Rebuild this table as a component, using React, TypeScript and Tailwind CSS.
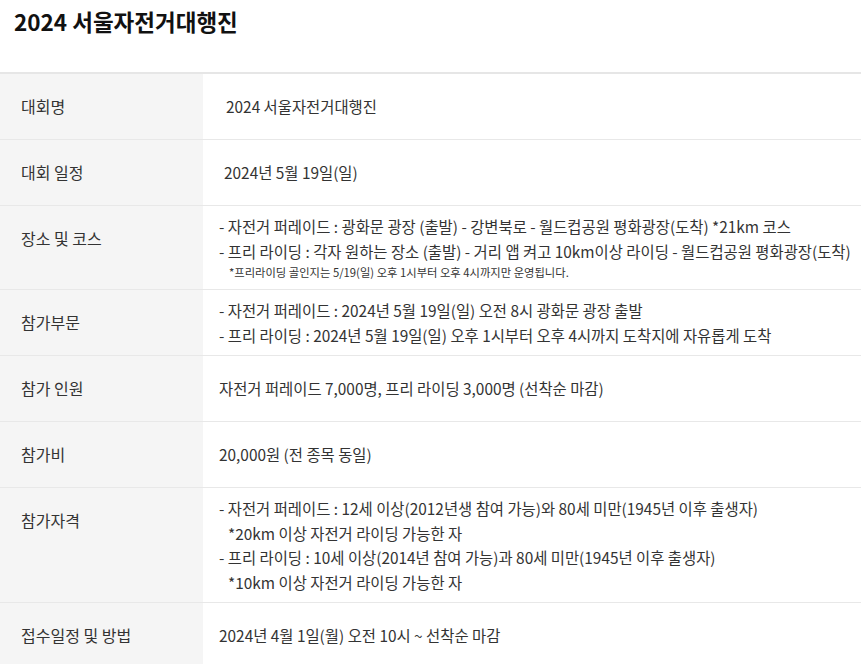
import React from "react";

const font = { fontFamily: '"Noto Sans CJK KR", "Noto Sans", sans-serif' };

type Row = { label: string; content: React.ReactNode };

const rows: Row[] = [
  { label: "대회명", content: <div className="ml-[7px]">2024 서울자전거대행진</div> },
  { label: "대회 일정", content: <div className="ml-[5px]">2024년 5월 19일(일)</div> },
  {
    label: "장소 및 코스",
    content: (
      <div>
        <div>- 자전거 퍼레이드 : 광화문 광장 (출발) - 강변북로 - 월드컵공원 평화광장(도착) *21km 코스</div>
        <div>- 프리 라이딩 : 각자 원하는 장소 (출발) - 거리 앱 켜고 10km이상 라이딩 - 월드컵공원 평화광장(도착)</div>
        <div className="pl-[10px] text-[11.3px] leading-[18px]">*프리라이딩 골인지는 5/19(일) 오후 1시부터 오후 4시까지만 운영됩니다.</div>
      </div>
    ),
  },
  {
    label: "참가부문",
    content: (
      <div>
        <div>- 자전거 퍼레이드 : 2024년 5월 19일(일) 오전 8시 광화문 광장 출발</div>
        <div>- 프리 라이딩 : 2024년 5월 19일(일) 오후 1시부터 오후 4시까지 도착지에 자유롭게 도착</div>
      </div>
    ),
  },
  { label: "참가 인원", content: <div>자전거 퍼레이드 7,000명, 프리 라이딩 3,000명 (선착순 마감)</div> },
  { label: "참가비", content: <div>20,000원 (전 종목 동일)</div> },
  {
    label: "참가자격",
    content: (
      <div>
        <div>- 자전거 퍼레이드 : 12세 이상(2012년생 참여 가능)와 80세 미만(1945년 이후 출생자)</div>
        <div className="pl-[9px]">*20km 이상 자전거 라이딩 가능한 자</div>
        <div>- 프리 라이딩 : 10세 이상(2014년 참여 가능)과 80세 미만(1945년 이후 출생자)</div>
        <div className="pl-[9px]">*10km 이상 자전거 라이딩 가능한 자</div>
      </div>
    ),
  },
  { label: "접수일정 및 방법", content: <div>2024년 4월 1일(월) 오전 10시 ~ 선착순 마감</div> },
];

export default function App() {
  return (
    <div className="w-[861px] bg-white text-[#333]" style={font}>
      <h1 className="px-[14px] pt-[6px] text-[22.5px] font-bold leading-[30px] text-[#111] h-[72px]">
        2024 서울자전거대행진
      </h1>
      <div className="border-t-2 border-[#e6e6e6]">
        {rows.map((r, i) => (
          <div
            key={i}
            className={`grid grid-cols-[203px_1fr] ${i > 0 ? "border-t border-[#e8e8e8]" : ""}`}
          >
            <div className="bg-[#f5f5f5] pl-[21px] py-[20px] text-[16px] leading-[25px]">{r.label}</div>
            <div className="flex items-center py-2 pl-[16px] text-[15.4px] leading-[24.5px] whitespace-nowrap">
              {r.content}
            </div>
          </div>
        ))}
      </div>
    </div>
  );
}
